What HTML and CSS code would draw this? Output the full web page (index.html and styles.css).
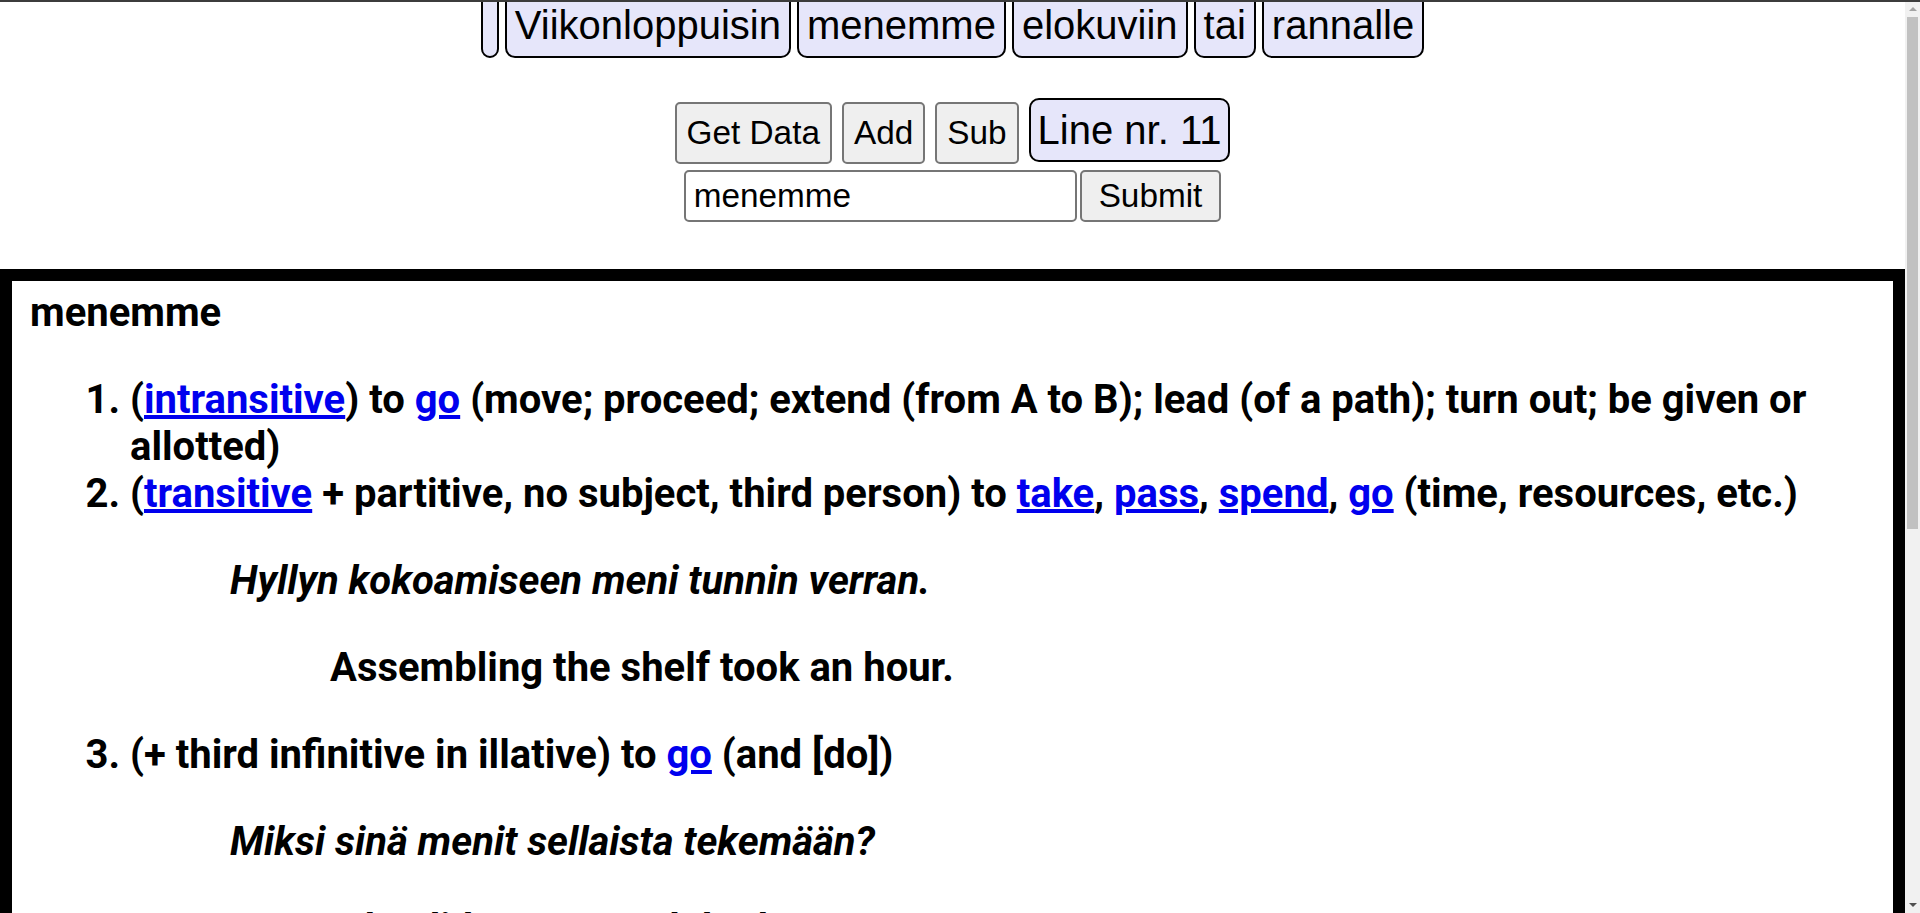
FILE: index.html
```html
<!DOCTYPE html>
<html lang="fi">
<head>
<meta charset="utf-8">
<title>Sanat</title>
<link rel="stylesheet" href="styles.css">
</head>
<body>
<div class="topline"></div>
<div class="scrollbar">
  <div class="sb-arrow sb-up"></div>
  <div class="sb-track"><div class="sb-thumb"></div></div>
  <div class="sb-arrow sb-down"></div>
</div>
<div class="words">
  <span class="wbtn"></span>
  <span class="wbtn">Viikonloppuisin</span>
  <span class="wbtn">menemme</span>
  <span class="wbtn">elokuviin</span>
  <span class="wbtn">tai</span>
  <span class="wbtn">rannalle</span>
</div>
<div class="controls">
  <button class="btn">Get Data</button>
  <button class="btn">Add</button>
  <button class="btn">Sub</button>
  <span class="linenr">Line nr. 11</span>
</div>
<form class="search">
  <input class="field" type="text" value="menemme">
  <button class="btn submit" type="button">Submit</button>
</form>
<div class="defs">
  <div class="headword">menemme</div>
  <ol class="senses">
    <li>(<a href="#">intransitive</a>) to <a href="#">go</a> (move; proceed; extend (from A to B); lead (of a path); turn out; be given or allotted)</li>
    <li>(<a href="#">transitive</a> + partitive, no subject, third person) to <a href="#">take</a>, <a href="#">pass</a>, <a href="#">spend</a>, <a href="#">go</a> (time, resources, etc.)
      <dl><dd><i>Hyllyn kokoamiseen meni tunnin verran.</i>
        <dl><dd>Assembling the shelf took an hour.</dd></dl>
      </dd></dl>
    </li>
    <li>(+ third infinitive in illative) to <a href="#">go</a> (and [do])
      <dl><dd><i>Miksi sinä menit sellaista tekemään?</i>
        <dl><dd>Why did you go and do that?</dd></dl>
      </dd></dl>
    </li>
    <li>(<a href="#">intransitive</a>) to <a href="#">go</a>, be <a href="#">sold</a>
      <dl><dd><i>Talo meni hyvään hintaan.</i>
        <dl><dd>The house went for a good price.</dd></dl>
      </dd></dl>
    </li>
    <li>(<a href="#">intransitive</a>) to <a href="#">fit</a>, <a href="#">go</a> (into)
      <dl><dd><i>Menevätkö kaikki tavarat laukkuun?</i>
        <dl><dd>Will all the things go into the bag?</dd></dl>
      </dd></dl>
    </li>
  </ol>
</div>
</body>
</html>
```
FILE: styles.css
```css
html, body {
  padding: 0;
  background: #fff;
}
html {
  margin: 0;
}
body {
  margin: 0 15px 0 0;
  font-family: "Liberation Sans", Arial, sans-serif;
  color: #000;
}
.topline {
  position: fixed;
  top: 0;
  left: 0;
  right: 0;
  height: 2px;
  background: #3c3c3c;
  z-index: 20;
}
.scrollbar {
  position: fixed;
  top: 0;
  right: 0;
  bottom: 0;
  width: 15px;
  background: #f1f1f1;
  display: flex;
  flex-direction: column;
  z-index: 10;
}
.sb-arrow {
  height: 17px;
  display: flex;
  align-items: center;
  justify-content: center;
  flex: none;
}
.sb-up::before {
  content: "";
  border-left: 4px solid transparent;
  border-right: 4px solid transparent;
  border-bottom: 4px solid #a3a3a3;
}
.sb-down::before {
  content: "";
  border-left: 4px solid transparent;
  border-right: 4px solid transparent;
  border-top: 4px solid #505050;
}
.sb-track {
  flex: 1;
  padding: 0 2px;
}
.sb-thumb {
  height: 512px;
  background: #c1c1c1;
}
.words {
  display: flex;
  justify-content: center;
  align-items: stretch;
  gap: 6px;
  margin-top: -8px;
}
.wbtn {
  display: block;
  font-family: "Liberation Sans", Arial, sans-serif;
  font-size: 40px;
  line-height: 46px;
  padding: 8px 8px;
  border: 2px solid #000;
  border-radius: 10px;
  background: #e6e6fa;
}
.wbtn:empty {
  padding: 8px 7px;
}
.controls {
  display: flex;
  justify-content: center;
  align-items: baseline;
  gap: 10px;
  margin-top: 40px;
}
.btn {
  font-family: "Liberation Sans", Arial, sans-serif;
  font-size: 33.33px;
  line-height: 38px;
  padding: 10px 10px;
  border: 2px solid #767676;
  border-radius: 5px;
  background: #efefef;
  color: #000;
  margin: 0;
}
.linenr {
  display: block;
  font-family: "Liberation Sans", Arial, sans-serif;
  font-size: 40px;
  line-height: 44px;
  padding: 8px 7px;
  border: 2px solid #000;
  border-radius: 10px;
  background: #e6e6fa;
}
.search {
  display: flex;
  justify-content: center;
  align-items: stretch;
  gap: 3px;
  margin: 6px 0 0;
}
.field {
  width: 373px;
  font-family: "Liberation Sans", Arial, sans-serif;
  font-size: 33.33px;
  line-height: 38px;
  padding: 5px 8px;
  border: 2px solid #767676;
  border-radius: 5px;
  color: #000;
  margin: 0;
}
.submit {
  padding: 5px 17px;
}
.defs {
  margin-top: 47px;
  border: 12px solid #000;
  padding: 8px 18px 48px;
  font-family: Roboto, "Liberation Sans", sans-serif;
  font-weight: 700;
  font-size: 40px;
}
.headword {
  font-weight: 700;
}
.senses {
  margin: 40px 0;
  padding-left: 100px;
}
.senses a {
  color: #0000ee;
  text-decoration: underline;
}
.senses dl {
  margin: 40px 0;
}
.senses dd {
  margin-left: 100px;
}
```
